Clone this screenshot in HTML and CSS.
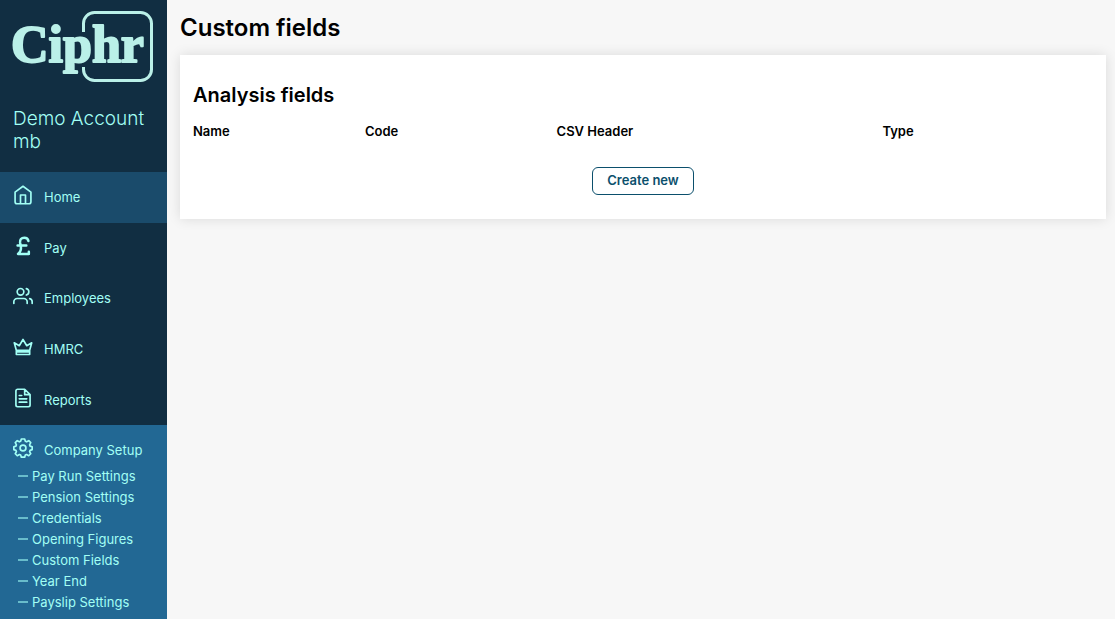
FILE: index.html
```html
<!DOCTYPE html>
<html lang="en">
<head>
<meta charset="utf-8">
<meta name="viewport" content="width=device-width, initial-scale=1">
<title>Custom fields</title>
<link rel="stylesheet" href="styles.css">
</head>
<body>
<div class="app">
  <aside class="sidebar">
    <svg class="logo" viewBox="0 0 142 72" role="img" aria-label="Ciphr">
      <path class="logo-frame" d="M71.500 21V12.500A11 11 0 0 1 82.500 1.500H128.500A11 11 0 0 1 139.500 12.500V58.500A11 11 0 0 1 128.500 69.500H82.500A11 11 0 0 1 71.500 58.500V56"/>
      <text class="logo-word" x="-1" y="51">Ciphr</text>
    </svg>
    <p class="account">Demo Account mb</p>
    <nav class="nav">
      <ul class="menu">
        <li><a class="item current" href="#"><svg class="icon" viewBox="0 0 24 24"><path d="M2.500 8.500 12 1.500l9.500 7V20a2.500 2.500 0 0 1-2.500 2.500H5A2.500 2.500 0 0 1 2.500 20z"/><path d="M9 22V12h6v10"/></svg>Home</a></li>
        <li><a class="item" href="#"><svg class="icon pound" viewBox="0 0 24 24"><path d="M18.500 6C18 3 16 2 13.500 2 10 2 8 4.500 8.500 8l1 5c.5 3.500-.5 6-3.500 8.500h13V19M5.500 11.500H16"/></svg>Pay</a></li>
        <li><a class="item" href="#"><svg class="icon" viewBox="0 0 24 24"><path d="M17 21v-2a4 4 0 0 0-4-4H5a4 4 0 0 0-4 4v2M23 21v-2a4 4 0 0 0-3-3.870M16 3.130a4 4 0 0 1 0 7.750"/><circle cx="9" cy="7" r="4"/></svg>Employees</a></li>
        <li><a class="item" href="#"><svg class="icon" viewBox="0 0 24 24"><path d="M4 16 1.500 7l6 3.500L12 3l4.500 7.500 6-3.500L20 16zM4 16v5h16v-5M4 18h16"/></svg>HMRC</a></li>
        <li><a class="item" href="#"><svg class="icon" viewBox="0 0 24 24"><path d="M14 1.500H5.500a2 2 0 0 0-2 2v17a2 2 0 0 0 2 2h13a2 2 0 0 0 2-2V8zM14 1.500V8h6.500M7.500 9h3M7.500 13h9M7.500 17h9"/></svg>Reports</a></li>
      </ul>
      <div class="section">
        <a class="item section-title" href="#"><svg class="icon" viewBox="0 0 24 24"><circle cx="12" cy="12" r="3.500"/><path d="M10 1.200h4l.8 2.800 1.500.6 2.600-1.400 2.400 2.400-1.400 2.600.6 1.500 2.500.8v3.500l-2.500.8-.6 1.500 1.400 2.600-2.400 2.400-2.600-1.400-1.500.6-.8 2.500h-4l-.8-2.500-1.500-.6-2.600 1.400-2.400-2.400 1.400-2.600-.6-1.500L1 14v-3.500l2.500-.8.6-1.500-1.400-2.600 2.400-2.400 2.600 1.400 1.500-.6z"/></svg>Company Setup</a>
        <ul class="submenu">
          <li><a class="subitem" href="#">Pay Run Settings</a></li>
          <li><a class="subitem" href="#">Pension Settings</a></li>
          <li><a class="subitem" href="#">Credentials</a></li>
          <li><a class="subitem" href="#">Opening Figures</a></li>
          <li><a class="subitem" href="#">Custom Fields</a></li>
          <li><a class="subitem" href="#">Year End</a></li>
          <li><a class="subitem" href="#">Payslip Settings</a></li>
        </ul>
      </div>
    </nav>
  </aside>
  <main class="main">
    <h1 class="title">Custom fields</h1>
    <section class="card">
      <h2 class="card-title">Analysis fields</h2>
      <table class="fields">
        <thead>
          <tr><th class="col-name" scope="col">Name</th><th class="col-code" scope="col">Code</th><th class="col-header" scope="col">CSV Header</th><th scope="col">Type</th></tr>
        </thead>
      </table>
      <div class="actions"><button class="create" type="button">Create new</button></div>
    </section>
  </main>
</div>
</body>
</html>
```
FILE: styles.css
```css
* { box-sizing: border-box; }
body {
  margin: 0;
  background: #f7f7f7;
  color: #000;
  font: 13px/20px Inter, "Liberation Sans", sans-serif;
}
ul, p, h1, h2 { margin: 0; padding: 0; list-style: none; }
a { color: inherit; text-decoration: none; }
.app { display: flex; min-height: 100vh; }
.sidebar {
  display: flex;
  flex-direction: column;
  flex: 0 0 167px;
  background: #112e42;
  color: #a2fff5;
}
.logo {
  width: 142px;
  height: 72px;
  margin: 11px 0 0 12px;
  overflow: visible;
}
.logo-frame { fill: none; stroke: #baf0e8; stroke-width: 3; }
.logo-word {
  fill: #baf0e8;
  stroke: #baf0e8;
  stroke-width: 2;
  stroke-linejoin: round;
  font: bold 52px "Liberation Serif", serif;
}
.account {
  padding: 24px 13px 19px;
  font-size: 19px;
  font-weight: 300;
  line-height: 23px;
}
.nav { display: flex; flex-direction: column; flex: 1; }
.menu { display: grid; grid-auto-rows: 1fr; min-height: 253px; }
.item {
  display: flex;
  align-items: center;
  gap: 11px;
  height: 100%;
  padding: 0 13px;
}
.current { background: #1a4b6b; }
.icon {
  flex: none;
  width: 20px;
  height: 20px;
  margin-bottom: 4px;
  fill: none;
  stroke: currentColor;
  stroke-width: 2;
  stroke-linecap: round;
  stroke-linejoin: round;
}
.pound { stroke-width: 3; }
.section { flex: 1; padding: 10px 0 6px; background: #226894; }
.section-title { height: 30px; }
.submenu {
  display: grid;
  grid-auto-rows: 1fr;
  min-height: 148px;
  padding-left: 18px;
}
.subitem { display: flex; align-items: center; gap: 4px; height: 100%; white-space: nowrap; }
.subitem::before { content: ""; width: 10px; height: 2px; background: #68bccb; }
.main { flex: 1; min-width: 0; padding: 12px 9px 12px 13px; }
.title { font-size: 24px; font-weight: 600; line-height: 32px; }
.card {
  margin-top: 11px;
  padding: 26px 13px 24px;
  background: #fff;
  box-shadow: 0 0 12px rgba(0, 0, 0, 0.12);
}
.card-title { font-size: 20px; font-weight: 600; line-height: 28px; }
.fields { width: 100%; margin-top: 12px; border-collapse: collapse; table-layout: fixed; }
.fields th { padding: 0; font-weight: 600; text-align: left; }
.col-name { width: 19.1%; }
.col-code { width: 21.3%; }
.col-header { width: 36.2%; }
.actions { display: flex; justify-content: center; margin-top: 26px; }
.create {
  padding: 2px 14px 4px;
  border: 1px solid #0b4f6c;
  border-radius: 6px;
  background: #fff;
  color: #0b4f6c;
  font: 600 13px/20px Inter, "Liberation Sans", sans-serif;
}
```
